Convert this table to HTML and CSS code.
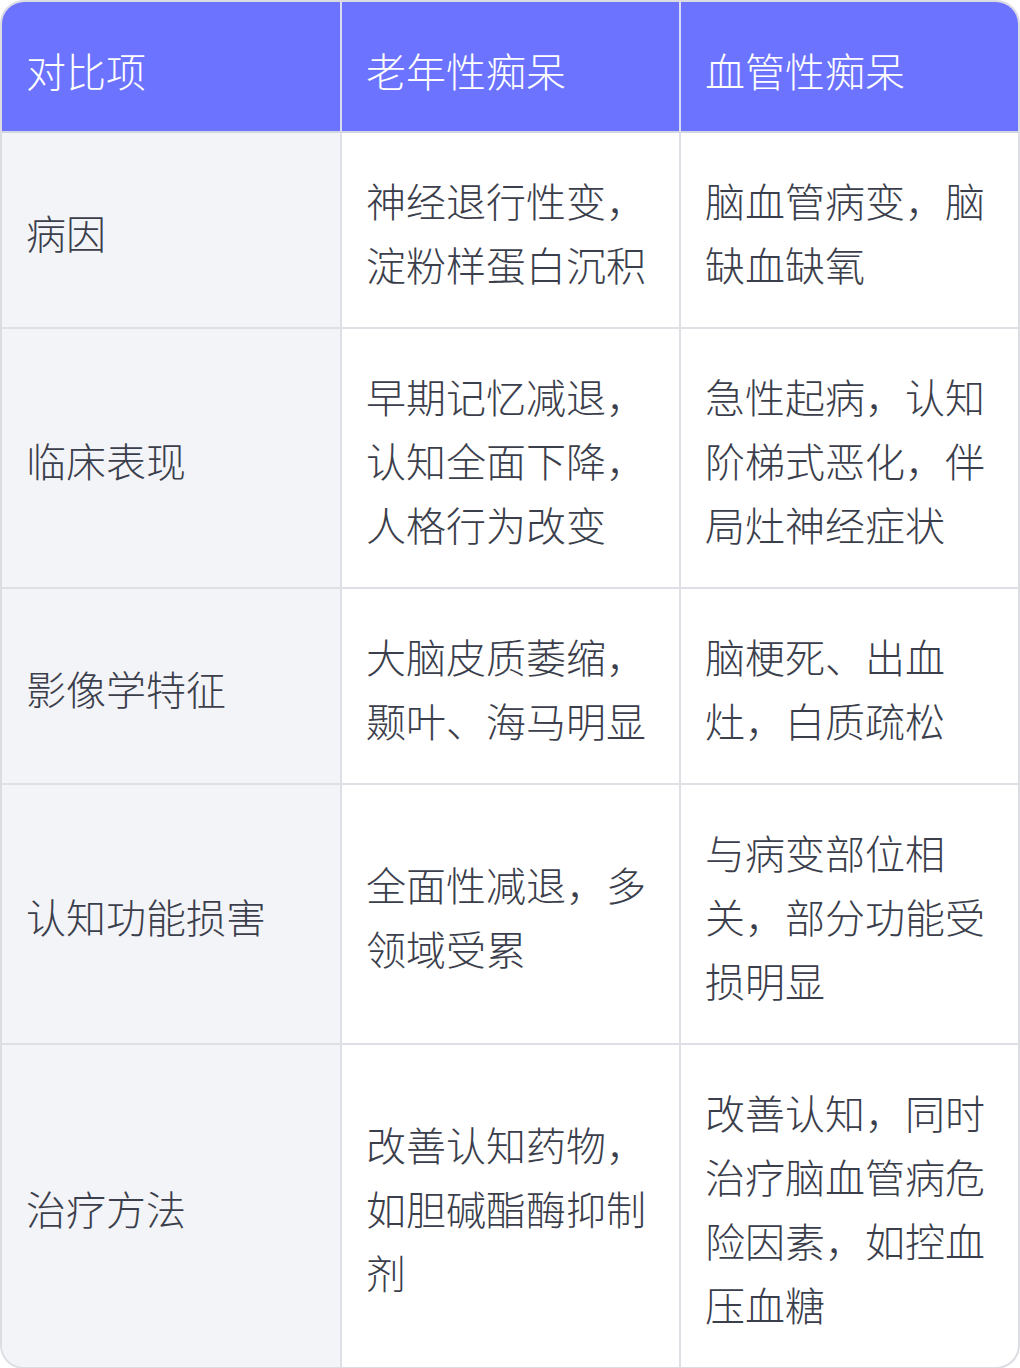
FILE: index.html
```html
<!DOCTYPE html>
<html lang="zh-CN">
<head>
<meta charset="utf-8">
<title>老年性痴呆与血管性痴呆对比</title>
<link rel="stylesheet" href="styles.css">
</head>
<body>
<div class="card">
  <table class="cmp">
    <colgroup>
      <col class="c1"><col class="c2"><col class="c3">
    </colgroup>
    <thead>
      <tr><th>对比项</th><th>老年性痴呆</th><th>血管性痴呆</th></tr>
    </thead>
    <tbody>
      <tr><td>病因</td><td>神经退行性变，淀粉样蛋白沉积</td><td>脑血管病变，脑缺血缺氧</td></tr>
      <tr><td>临床表现</td><td>早期记忆减退，认知全面下降，人格行为改变</td><td>急性起病，认知阶梯式恶化，伴局灶神经症状</td></tr>
      <tr><td>影像学特征</td><td>大脑皮质萎缩，颞叶、海马明显</td><td>脑梗死、出血灶，白质疏松</td></tr>
      <tr><td>认知功能损害</td><td>全面性减退，多领域受累</td><td>与病变部位相关，部分功能受损明显</td></tr>
      <tr><td>治疗方法</td><td>改善认知药物，如胆碱酯酶抑制剂</td><td>改善认知，同时治疗脑血管病危险因素，如控血压血糖</td></tr>
    </tbody>
  </table>
</div>
</body>
</html>
```

FILE: styles.css
```css
html, body {
  margin: 0;
  padding: 0;
  background: #ffffff;
}

.card {
  width: 1020px;
  box-sizing: border-box;
  border: 2px solid #dcdde3;
  border-radius: 24px;
  overflow: hidden;
  background: #ffffff;
}

.cmp {
  width: 1016px;
  table-layout: fixed;
  border-collapse: separate;
  border-spacing: 0;
  font-family: "Noto Sans CJK SC", "Noto Sans", sans-serif;
  font-weight: 300;
  font-size: 40px;
  line-height: 64px;
  color: #3b3e4b;
}

.c1 { width: 340px; }
.c2 { width: 339px; }
.c3 { width: 337px; }

.cmp th,
.cmp td {
  padding: 35px 23px 31px 24px;
  text-align: left;
  vertical-align: middle;
  border-right: 2px solid #dfe0e6;
  border-bottom: 2px solid #dfe0e6;
  word-break: break-all;
}

.cmp th:last-child,
.cmp td:last-child {
  border-right: none;
}

.cmp tbody tr:last-child td {
  border-bottom: none;
}

.cmp th {
  background: #6c73ff;
  color: #ffffff;
  font-weight: 300;
  padding-top: 36px;
  padding-bottom: 29px;
  border-bottom-color: #d3d5e2;
  border-right-color: #d9dbf0;
}

.cmp td:first-child {
  background: #f3f4f8;
}
```
